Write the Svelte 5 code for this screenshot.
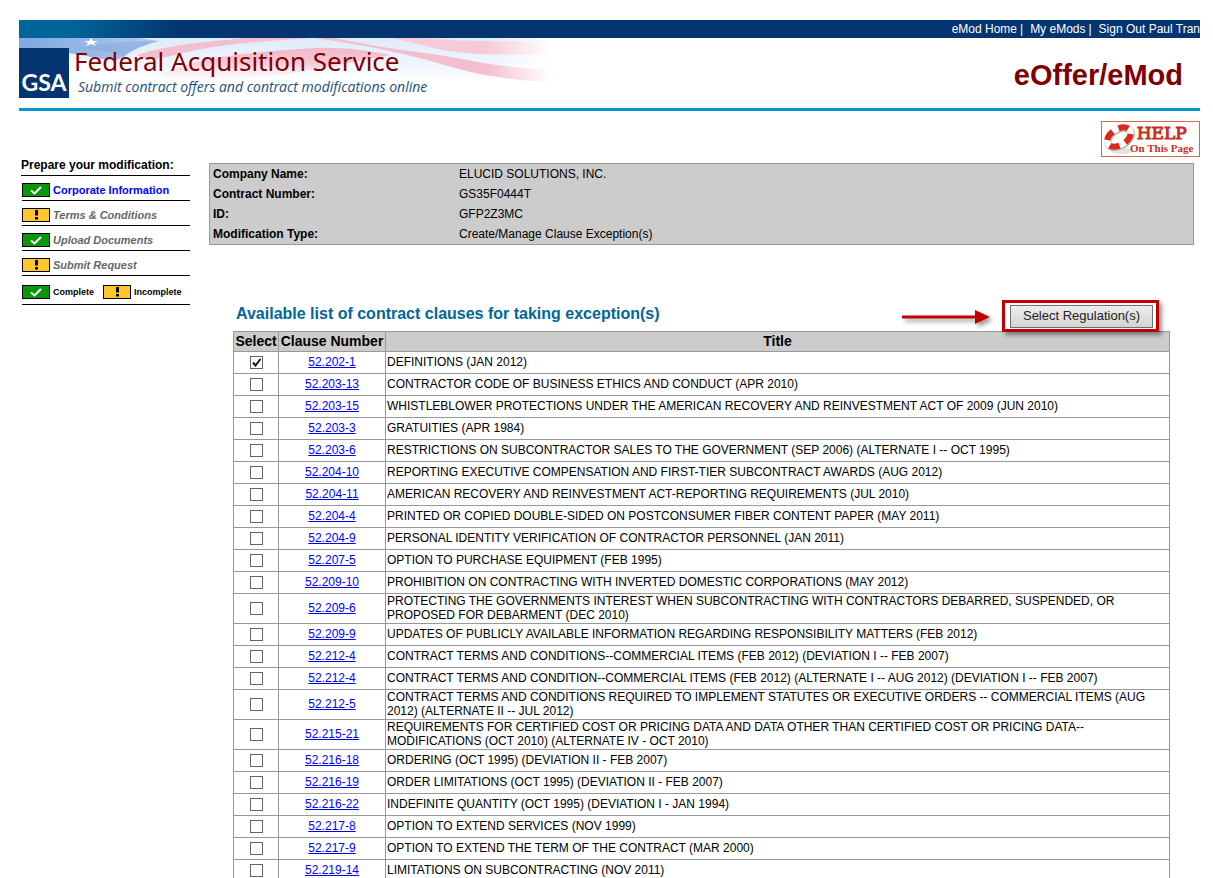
<script>
  const steps = [
    { label: 'Corporate Information', done: true, current: true },
    { label: 'Terms & Conditions', done: false },
    { label: 'Upload Documents', done: true },
    { label: 'Submit Request', done: false }
  ];

  const details = [
    ['Company Name:', 'ELUCID SOLUTIONS, INC.'],
    ['Contract Number:', 'GS35F0444T'],
    ['ID:', 'GFP2Z3MC'],
    ['Modification Type:', 'Create/Manage Clause Exception(s)']
  ];

  const clauses = $state([
    { number: '52.202-1', title: 'DEFINITIONS (JAN 2012)', selected: true },
    { number: '52.203-13', title: 'CONTRACTOR CODE OF BUSINESS ETHICS AND CONDUCT (APR 2010)' },
    { number: '52.203-15', title: 'WHISTLEBLOWER PROTECTIONS UNDER THE AMERICAN RECOVERY AND REINVESTMENT ACT OF 2009 (JUN 2010)' },
    { number: '52.203-3', title: 'GRATUITIES (APR 1984)' },
    { number: '52.203-6', title: 'RESTRICTIONS ON SUBCONTRACTOR SALES TO THE GOVERNMENT (SEP 2006) (ALTERNATE I -- OCT 1995)' },
    { number: '52.204-10', title: 'REPORTING EXECUTIVE COMPENSATION AND FIRST-TIER SUBCONTRACT AWARDS (AUG 2012)' },
    { number: '52.204-11', title: 'AMERICAN RECOVERY AND REINVESTMENT ACT-REPORTING REQUIREMENTS (JUL 2010)' },
    { number: '52.204-4', title: 'PRINTED OR COPIED DOUBLE-SIDED ON POSTCONSUMER FIBER CONTENT PAPER (MAY 2011)' },
    { number: '52.204-9', title: 'PERSONAL IDENTITY VERIFICATION OF CONTRACTOR PERSONNEL (JAN 2011)' },
    { number: '52.207-5', title: 'OPTION TO PURCHASE EQUIPMENT (FEB 1995)' },
    { number: '52.209-10', title: 'PROHIBITION ON CONTRACTING WITH INVERTED DOMESTIC CORPORATIONS (MAY 2012)' },
    { number: '52.209-6', title: 'PROTECTING THE GOVERNMENTS INTEREST WHEN SUBCONTRACTING WITH CONTRACTORS DEBARRED, SUSPENDED, OR PROPOSED FOR DEBARMENT (DEC 2010)' },
    { number: '52.209-9', title: 'UPDATES OF PUBLICLY AVAILABLE INFORMATION REGARDING RESPONSIBILITY MATTERS (FEB 2012)' },
    { number: '52.212-4', title: 'CONTRACT TERMS AND CONDITIONS--COMMERCIAL ITEMS (FEB 2012) (DEVIATION I -- FEB 2007)' },
    { number: '52.212-4', title: 'CONTRACT TERMS AND CONDITION--COMMERCIAL ITEMS (FEB 2012) (ALTERNATE I -- AUG 2012) (DEVIATION I -- FEB 2007)' },
    { number: '52.212-5', title: 'CONTRACT TERMS AND CONDITIONS REQUIRED TO IMPLEMENT STATUTES OR EXECUTIVE ORDERS -- COMMERCIAL ITEMS (AUG 2012) (ALTERNATE II -- JUL 2012)' },
    { number: '52.215-21', title: 'REQUIREMENTS FOR CERTIFIED COST OR PRICING DATA AND DATA OTHER THAN CERTIFIED COST OR PRICING DATA--MODIFICATIONS (OCT 2010) (ALTERNATE IV - OCT 2010)' },
    { number: '52.216-18', title: 'ORDERING (OCT 1995) (DEVIATION II - FEB 2007)' },
    { number: '52.216-19', title: 'ORDER LIMITATIONS (OCT 1995) (DEVIATION II - FEB 2007)' },
    { number: '52.216-22', title: 'INDEFINITE QUANTITY (OCT 1995) (DEVIATION I - JAN 1994)' },
    { number: '52.217-8', title: 'OPTION TO EXTEND SERVICES (NOV 1999)' },
    { number: '52.217-9', title: 'OPTION TO EXTEND THE TERM OF THE CONTRACT (MAR 2000)' },
    { number: '52.219-14', title: 'LIMITATIONS ON SUBCONTRACTING (NOV 2011)' }
  ].map((clause) => ({ selected: false, ...clause })));
</script>

{#snippet status(done)}
  <svg class="status" width="28" height="14" viewBox="0 0 28 14" aria-hidden="true">
    <rect x="0.5" y="0.5" width="27" height="13" fill={done ? '#0a960a' : '#ffc72c'} stroke="#000" />
    {#if done}
      <path d="M9 7.5 12.5 10.5 19 4" fill="none" stroke="#fff" stroke-width="2" />
    {:else}
      <path d="M13 2h3v5.500h-3zM13 9h3v2.500h-3z" fill="#000" />
    {/if}
  </svg>
{/snippet}

<div class="page">
  <header>
    <nav class="topbar">
      <a href="#home">eMod Home</a><span>|</span>
      <a href="#mods">My eMods</a><span>|</span>
      <a href="#signout">Sign Out Paul Tran</a>
    </nav>
    <div class="banner">
      <svg class="flag" width="531" height="62" viewBox="0 0 531 62" aria-hidden="true">
        <defs>
          <linearGradient id="fadeDown" x1="0" y1="0" x2="0" y2="1">
            <stop offset="0" stop-color="#dfebfa" />
            <stop offset="0.5" stop-color="#edf4fd" />
            <stop offset="1" stop-color="#fff" />
          </linearGradient>
          <linearGradient id="canton" x1="0" y1="0" x2="1" y2="0">
            <stop offset="0" stop-color="#7fa8e0" />
            <stop offset="0.6" stop-color="#9dbbe8" />
            <stop offset="1" stop-color="#b4caee" />
          </linearGradient>
          <linearGradient id="fadeRight" x1="0" y1="0" x2="1" y2="0">
            <stop offset="0.88" stop-color="#fff" />
            <stop offset="1" stop-color="#000" />
          </linearGradient>
          <linearGradient id="lowStripe" x1="0" y1="0" x2="0" y2="1">
            <stop offset="0" stop-color="#f0b9ca" />
            <stop offset="0.4" stop-color="#f4c8d5" />
            <stop offset="1" stop-color="#fff" stop-opacity="0" />
          </linearGradient>
          <mask id="flagMask"><rect width="531" height="62" fill="url(#fadeRight)" /></mask>
        </defs>
        <g mask="url(#flagMask)">
          <path d="M0 0H531V45C470 40 430 42 380 38C300 34 230 45 150 42C110 34 80 26 50 20L0 12Z" fill="url(#fadeDown)" />
          <path d="M0 0H120L140 3C125 7 112 12 104 20C92 25 70 18 50 15L0 12Z" fill="url(#canton)" />
          <path d="M50 12C80 5 110 3 140 3C125 7 112 12 104 18C85 12 68 11 50 12Z" fill="#8aabdd" opacity="0.6" />
          <path d="m72 0 2 3h5l-4 2 2 3-5-2-5 2 2-3-4-2h5z" fill="#fff" />
          <path d="M118 17C150 6 190 4 225 0H290C245 3 205 6 168 14C152 18 138 22 126 21Z" fill="#f2bfcf" />
          <path d="M144 36C180 20 220 15 281 11C315 8 340 11 372 17C340 22 310 30 270 36C220 40 180 48 155 46Z" fill="url(#lowStripe)" />
          <path d="M294 0H316C345 6 380 12 420 17C455 23 490 31 531 31V44C485 42 450 35 415 24C375 13 335 5 294 0Z" fill="#f3bfce" />
          <path d="M374 0H410C450 5 490 2 531 4V16C490 17 450 18 414 10Z" fill="#f6cad7" />
        </g>
      </svg>
      <div class="gsa">GSA</div>
      <div class="titles">
        <h1>Federal Acquisition Service</h1>
        <p>Submit contract offers and contract modifications online</p>
      </div>
      <strong class="brand">eOffer/eMod</strong>
    </div>
  </header>

  <div class="help-row">
    <a class="help" href="#help">
      <svg width="34" height="34" viewBox="0 0 34 34" aria-hidden="true">
        <ellipse cx="20" cy="29" rx="11" ry="3" fill="#e4e2e2" />
        <g transform="rotate(-32 17 15)" fill="none">
          <ellipse cx="17" cy="16" rx="13" ry="8" stroke="#b3acac" stroke-width="7" />
          <ellipse cx="17" cy="15" rx="13" ry="8" stroke="#fff" stroke-width="6" />
          <ellipse cx="17" cy="15" rx="13" ry="8" stroke="#d82a1c" stroke-width="6" pathLength="80" stroke-dasharray="12 8" stroke-dashoffset="-5" />
        </g>
      </svg>
      <span class="help-text"><b>HELP</b><span>On This Page</span></span>
    </a>
  </div>

  <div class="body">
    <aside>
      <h2>Prepare your modification:</h2>
      <ul>
        {#each steps as step}
          <li>{@render status(step.done)}<a href="#step" class:current={step.current}>{step.label}</a></li>
        {/each}
      </ul>
      <div class="legend">
        {@render status(true)}<span>Complete</span>
        {@render status(false)}<span>Incomplete</span>
      </div>
    </aside>

    <main>
      <dl>
        {#each details as [term, value]}
          <dt>{term}</dt><dd>{value}</dd>
        {/each}
      </dl>

      <section>
        <div class="heading">
          <h3>Available list of contract clauses for taking exception(s)</h3>
          <div class="action">
            <svg class="arrow" width="96" height="24" viewBox="0 0 96 24" aria-hidden="true">
              <path d="M2 10.500H75V5L90 12 75 19V13.500H2Z" fill="#c00000" />
            </svg>
            <div class="callout"><button type="button">Select Regulation(s)</button></div>
          </div>
        </div>
        <table>
          <colgroup><col class="pick" /><col class="number" /><col /></colgroup>
          <thead><tr><th>Select</th><th>Clause Number</th><th>Title</th></tr></thead>
          <tbody>
            {#each clauses as clause, i}
              <tr>
                <td><input type="checkbox" id="clause-{i}" aria-label={clause.number} bind:checked={clause.selected} /></td>
                <td><a href="#clause">{clause.number}</a></td>
                <td><label for="clause-{i}">{clause.title}</label></td>
              </tr>
            {/each}
          </tbody>
        </table>
      </section>
    </main>
  </div>
</div>

<style>
  :global(body) { margin: 0; background: #fff; }
  .page {
    padding: 20px 13px 0 19px;
    font-family: "Liberation Sans", Arial, sans-serif;
    font-size: 12px;
    color: #000;
  }
  h1, h2, h3, p, ul, dl, dd { margin: 0; padding: 0; }
  .topbar {
    display: flex;
    justify-content: flex-end;
    gap: 3px;
    height: 18px;
    line-height: 18px;
    background: linear-gradient(90deg, #006699 0, #006699 50px, #043570 160px);
    color: #fff;
    white-space: nowrap;
  }
  .topbar a { color: #fff; text-decoration: none; }
  .topbar span { margin-right: 4px; }
  .banner {
    position: relative;
    display: flex;
    align-items: flex-start;
    height: 70px;
    border-bottom: 3px solid #0099cc;
  }
  .flag { position: absolute; left: 0; top: 0; }
  .gsa {
    position: relative;
    width: 50px;
    height: 50px;
    margin-top: 10px;
    line-height: 68px;
    background: #043570;
    color: #fff;
    font-family: Lato, sans-serif;
    font-size: 23px;
    font-weight: 700;
    text-align: center;
  }
  .titles { position: relative; margin: 7px 0 0 5px; flex: 1; }
  h1 {
    font: 400 26px/32px "Noto Sans", sans-serif;
    color: #800000;
  }
  .titles p {
    padding-left: 4px;
    font: italic 14px/20px "Open Sans", sans-serif;
    color: #1c4f7c;
  }
  .brand {
    position: relative;
    margin: 20px 17px 0 0;
    font-size: 29px;
    line-height: 34px;
    color: #800000;
  }
  .help-row { display: flex; justify-content: flex-end; padding: 10px 0 6px; }
  .help {
    display: flex;
    align-items: center;
    box-sizing: border-box;
    width: 99px;
    height: 36px;
    border: 1px solid #d8674f;
    color: #c8301c;
    text-decoration: none;
  }
  .help-text { display: flex; flex-direction: column; align-items: center; margin-left: -6px; white-space: nowrap; }
  .help-text b { font: 400 17px/18px "DejaVu Serif", serif; -webkit-text-stroke: 1px #c8301c; }
  .help-text span { font: 700 11px/13px "Liberation Serif", serif; }
  .body { display: flex; gap: 19px; }
  aside { width: 171px; box-sizing: border-box; padding-left: 3px; flex: none; }
  h2 {
    margin-left: -1px;
    font-size: 12px;
    line-height: 5px;
    padding-bottom: 7px;
    border-bottom: 1px solid #000;
    white-space: nowrap;
  }
  ul { list-style: none; }
  li, .legend {
    display: flex;
    align-items: center;
    gap: 3px;
    border-bottom: 1px solid #000;
  }
  li { height: 20px; padding-top: 4px; }
  li a { color: #666; font: italic 700 11px/14px "Liberation Sans", sans-serif; text-decoration: none; }
  li a.current { color: #0000ff; font-style: normal; }
  .legend { height: 24px; padding-top: 4px; }
  .legend span { font-size: 9px; font-weight: 700; }
  .legend span:nth-of-type(1) { margin-right: 6px; }
  .status { flex: none; }
  main { flex: 1; min-width: 0; margin-right: 6px; }
  dl {
    display: grid;
    grid-template-columns: 246px 1fr;
    padding: 0 3px;
    line-height: 20px;
    background: #ccc;
    border: 1px solid #999;
  }
  dt { font-weight: 700; }
  section { padding: 55px 24px 0; }
  .heading { display: flex; justify-content: space-between; height: 31px; }
  h3 { padding-left: 3px; font-size: 16px; line-height: 28px; color: #069; }
  .action { display: flex; align-items: center; gap: 6px; margin-right: 11px; }
  .arrow { margin-top: 3px; filter: drop-shadow(3px 3px 2px #0006); }
  .callout {
    position: relative;
    z-index: 1;
    padding: 2px 3px 1px 5px;
    border: 3px solid #c00000;
    box-shadow: 3px 3px 4px #0006;
    background: #fff;
  }
  button {
    display: block;
    box-sizing: border-box;
    width: 143px;
    height: 23px;
    padding: 0;
    border: 1px solid #707070;
    background: linear-gradient(#eee, #d4d4d4);
    color: #222;
    font: 13px/20px "Liberation Sans", Arial, sans-serif;
  }
  table { width: 100%; table-layout: fixed; border-collapse: collapse; }
  .pick { width: 45px; }
  .number { width: 107px; }
  th, td { border: 1px solid #999; line-height: 14px; }
  th { height: 18px; padding: 0 0 1px; background: #ccc; font-size: 14px; white-space: nowrap; }
  td { height: 20px; padding: 0 1px 1px; text-align: center; }
  td:last-child { text-align: left; }
  td a { color: #0000ff; }
  td label { display: block; }
  input {
    appearance: none;
    display: block;
    box-sizing: border-box;
    width: 13px;
    height: 13px;
    margin: 0 auto;
    border: 1px solid #666;
    background: #fff;
  }
  input:checked {
    background: #fff url("data:image/svg+xml,%3Csvg xmlns='http://www.w3.org/2000/svg' viewBox='0 0 11 11'%3E%3Cpath d='M2 5.500 4.500 8.500 9.500 2' fill='none' stroke='%23111' stroke-width='2'/%3E%3C/svg%3E") center / 11px 11px no-repeat;
  }
</style>
